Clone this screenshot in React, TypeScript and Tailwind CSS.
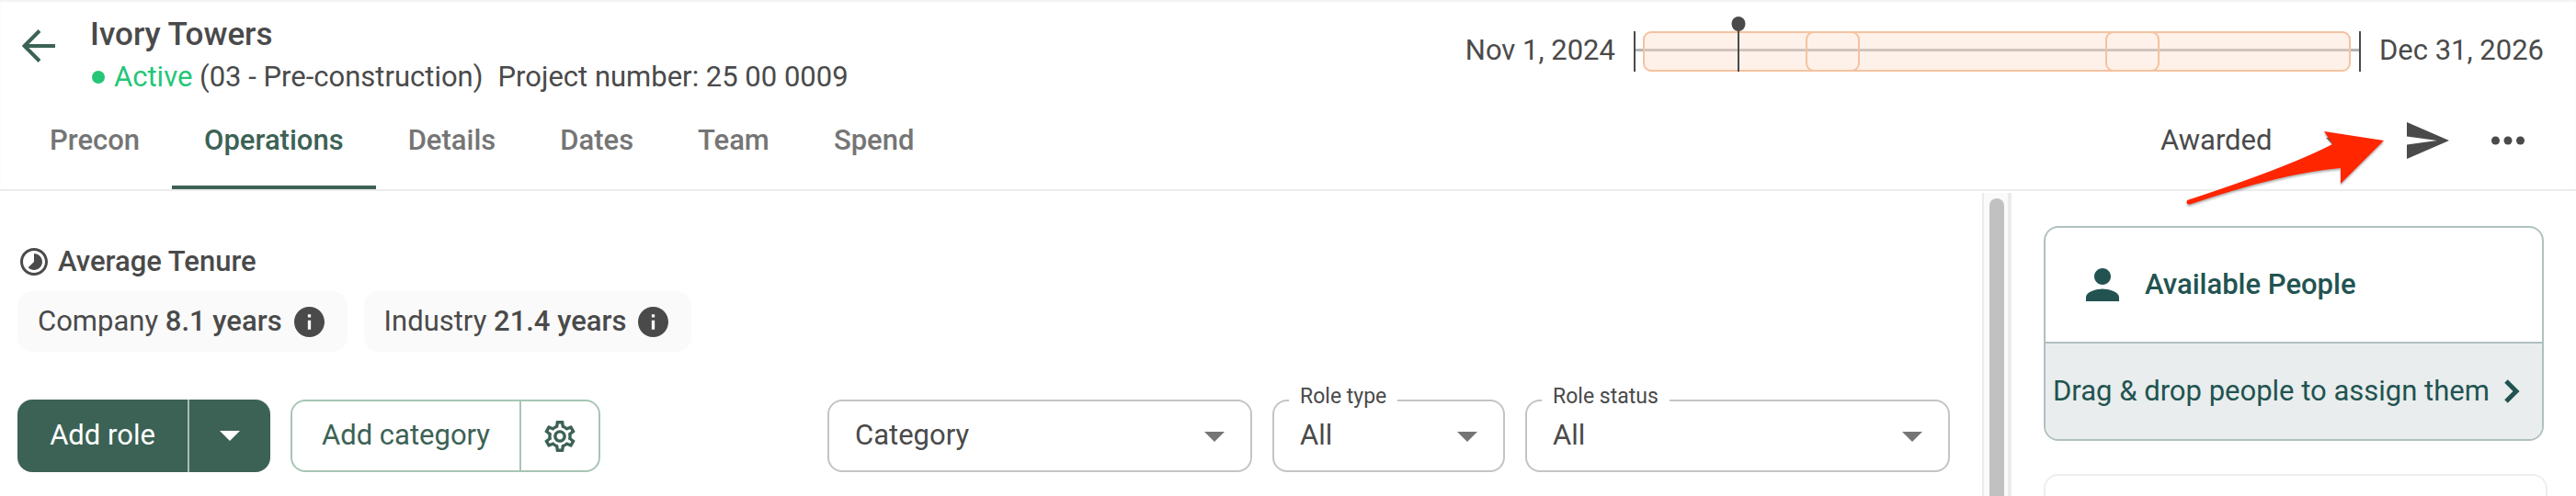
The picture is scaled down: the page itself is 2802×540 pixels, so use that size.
import React from 'react';

const tabs = ['Precon', 'Operations', 'Details', 'Dates', 'Team', 'Spend'];

const Caret = ({ className = '' }: { className?: string }) => (
  <svg viewBox="0 0 22 11" className={`w-[22px] h-[11px] pointer-events-none ${className}`} fill="currentColor" aria-hidden="true">
    <path d="M0 0h22L11 11z" />
  </svg>
);

const InfoIcon = () => (
  <svg viewBox="2 2 20 20" className="size-[33px] text-[#4a4a4a]" fill="currentColor" aria-hidden="true">
    <path d="M12 2C6.48 2 2 6.48 2 12s4.48 10 10 10 10-4.48 10-10S17.52 2 12 2zm1 15h-2v-6h2v6zm0-8h-2V7h2v2z" />
  </svg>
);

type FieldProps = { id: string; label?: string; value: string; className: string };

const SelectField: React.FC<FieldProps> = ({ id, label, value, className }) => (
  <div className={`relative h-[79px] ${className}`}>
    <select
      id={id}
      aria-label={label ?? value}
      className="appearance-none w-full h-full rounded-2xl border-2 border-[#c4c4c4] bg-white px-7 text-[31px] text-[#4a4a4a]"
    >
      <option>{value}</option>
    </select>
    {label && (
      <label htmlFor={id} className="absolute left-[18px] -top-[19px] bg-white px-3 text-[23px] leading-8">
        {label}
      </label>
    )}
    <Caret className="absolute right-[30px] top-[35px] text-[#757575]" />
  </div>
);

const Timeline = () => (
  <div className="flex items-center self-start gap-5">
    <span>Nov 1, 2024</span>
    <svg viewBox="0 0 791 78" className="w-[791px] h-[78px]" fill="none" aria-hidden="true">
      <path d="M0 38.500H791" stroke="#b4b4b4" strokeWidth="3" />
      <rect x="10" y="18" width="770" height="44" rx="9" fill="#f9dcc8" fillOpacity=".4" />
      <g stroke="#f4c2a0" strokeWidth="2">
        <rect x="11" y="19" width="234" height="42" rx="8" />
        <rect x="188" y="19" width="383" height="42" rx="8" />
        <rect x="514" y="19" width="265" height="42" rx="8" />
      </g>
      <path d="M1 18V62M790 18V62M114 10V62" stroke="#4a4a4a" strokeWidth="2" />
      <ellipse cx="114" cy="10" rx="7.500" ry="8" fill="#4a4a4a" />
    </svg>
    <span>Dec 31, 2026</span>
  </div>
);

const Header = () => (
  <header className="relative border-b-2 border-[#ededed] shadow-[inset_0_2px_2px_#f3f3f3]">
    <div className="flex justify-between pl-6 pr-[35px] pt-4">
      <div className="flex gap-[38px]">
        <button aria-label="Back" className="text-[#3c6255] self-start mt-4">
          <svg viewBox="0 0 36 36" className="size-9" fill="none" stroke="currentColor" strokeWidth="4" aria-hidden="true">
            <path d="M36 18H3M19 1.500L2.500 18 19 34.500" />
          </svg>
        </button>
        <div className="pt-0.5">
          <h1 className="text-[35px] leading-10 font-medium">Ivory Towers</h1>
          <p className="flex items-center leading-[52px] whitespace-pre">
            <span className="size-[14px] rounded-full bg-[#24c677] mr-2.5 ml-0.5" />
            <span className="text-[#24c677]">Active</span> (03 - Pre-construction)
            <span className="ml-4">Project number: 25 00 0009</span>
          </p>
        </div>
      </div>
      <Timeline />
    </div>

    <div className="flex justify-between items-start">
      <nav className="flex pl-[19px]">
        {tabs.map((tab) => (
          <a
            key={tab}
            href="#"
            className={
              tab === 'Operations'
                ? 'h-24 px-[35px] pt-5 font-medium text-[#3c6255] border-b-4 border-[#3c6255]'
                : 'h-24 px-[35px] pt-5 font-medium text-[#757575]'
            }
          >
            {tab}
          </a>
        ))}
      </nav>
      <div className="flex items-center h-[86px] pr-14 gap-[46px]">
        <div className="relative">
          <select aria-label="Status" className="appearance-none w-[222px]">
            <option>Awarded</option>
          </select>
          <Caret className="absolute right-5 top-5 text-[#757575]" />
        </div>
        <button aria-label="Send">
          <svg viewBox="2 3 21 18" className="w-[46px] h-[40px]" fill="currentColor" preserveAspectRatio="none" aria-hidden="true">
            <path d="M2.010 21L23 12 2.010 3 2 10l15 2-15 2z" />
          </svg>
        </button>
        <button aria-label="More">
          <svg viewBox="0 0 36 10" className="w-9 h-2.5" fill="currentColor" aria-hidden="true">
            <circle cx="4.500" cy="5" r="4.500" />
            <circle cx="18" cy="5" r="4.500" />
            <circle cx="31.500" cy="5" r="4.500" />
          </svg>
        </button>
      </div>
    </div>

    {/* callout pointing at the send button */}
    <svg viewBox="0 0 222 90" className="absolute right-[206px] top-[138px] w-[222px] h-[90px] pointer-events-none drop-shadow-[0_2px_1px_rgba(0,0,0,0.3)]" aria-hidden="true">
      <path d="M5 80Q115 44 163 19L154 5 219 15 172 62V45Q110 50 8 84.500Q5 85 4.500 82.500Z" fill="#ff2600" />
    </svg>
  </header>
);

const Tenure = () => (
  <section>
    <h2 className="flex items-center gap-[11px] px-[3px] leading-[44px] font-medium">
      <svg viewBox="2 2 20 20" className="size-[30px]" fill="currentColor" aria-hidden="true">
        <path d="M16.240 7.760C15.070 6.590 13.540 6 12 6v6l-4.240 4.240c2.340 2.340 6.140 2.340 8.490 0 2.340-2.340 2.340-6.140-.01-8.480zM12 2C6.480 2 2 6.480 2 12s4.480 10 10 10 10-4.480 10-10S17.520 2 12 2zm0 18c-4.420 0-8-3.580-8-8s3.580-8 8-8 8 3.580 8 8-3.580 8-8 8z" />
      </svg>
      Average Tenure
    </h2>
    <div className="flex gap-[18px] mt-2.5">
      {[
        ['Company', '8.1 years'],
        ['Industry', '21.4 years'],
      ].map(([name, years]) => (
        <div key={name} className="flex items-center h-[66px] pl-[22px] pr-[25px] gap-[13px] rounded-2xl bg-[#fafafa]">
          <span>
            {name} <b className="font-medium">{years}</b>
          </span>
          <InfoIcon />
        </div>
      ))}
    </div>
  </section>
);

const Toolbar = () => (
  <div className="flex items-center justify-between mt-[52px]">
    <div className="flex gap-[22px] h-[79px]">
      <div className="flex rounded-2xl bg-[#3c6255] text-white">
        <button className="w-[187px] border-r-2 border-[#a9bdb5]">Add role</button>
        <button aria-label="More role options" className="w-[88px] flex items-center justify-center">
          <Caret />
        </button>
      </div>
      <div className="flex rounded-2xl border-2 border-[#a8c5b6] text-[#3c6255]">
        <button className="w-[249px] border-r-2 border-[#a8c5b6]">Add category</button>
        <button aria-label="Category settings" className="w-[84px] flex items-center justify-center">
          <svg viewBox="2 2 20 20" className="size-[34px]" fill="currentColor" aria-hidden="true">
            <path d="M19.430 12.980c.04-.32.07-.64.07-.98 0-.34-.03-.66-.07-.98l2.110-1.650c.19-.15.24-.42.12-.64l-2-3.460c-.09-.16-.26-.25-.44-.25-.06 0-.12.010-.17.030l-2.490 1c-.52-.4-1.080-.73-1.690-.98l-.38-2.650C14.460 2.180 14.250 2 14 2h-4c-.25 0-.46.18-.49.42l-.38 2.650c-.61.25-1.170.59-1.690.98l-2.490-1c-.06-.02-.12-.03-.18-.03-.17 0-.34.09-.43.25l-2 3.460c-.13.22-.07.49.12.64l2.110 1.650c-.04.32-.07.65-.07.98 0 .33.030.66.070.98l-2.110 1.650c-.19.15-.24.42-.12.64l2 3.460c.09.16.26.25.44.25.06 0 .12-.01.17-.03l2.490-1c.52.4 1.080.73 1.690.98l.38 2.650c.03.24.24.42.49.42h4c.25 0 .46-.18.49-.42l.38-2.650c.61-.25 1.170-.59 1.690-.98l2.490 1c.06.02.12.03.18.03.17 0 .34-.09.43-.25l2-3.460c.12-.22.07-.49-.12-.64l-2.110-1.650zm-1.980-1.710c.04.31.05.52.05.73 0 .21-.02.43-.05.73l-.14 1.130.89.7 1.080.84-.7 1.210-1.270-.51-1.040-.42-.9.68c-.43.32-.84.56-1.250.73l-1.060.43-.16 1.130-.2 1.350h-1.400l-.19-1.350-.16-1.130-1.060-.43c-.43-.18-.83-.41-1.230-.71l-.91-.7-1.060.43-1.270.51-.7-1.210 1.080-.84.89-.7-.14-1.130c-.03-.31-.05-.54-.05-.74s.02-.43.05-.73l.14-1.130-.89-.7-1.080-.84.7-1.210 1.270.51 1.040.42.9-.68c.43-.32.84-.56 1.250-.73l1.060-.43.16-1.130.2-1.350h1.390l.19 1.350.16 1.130 1.060.43c.43.18.83.41 1.230.71l.91.7 1.060-.43 1.270-.51.7 1.210-1.070.85-.89.7.14 1.130zM12 8c-2.210 0-4 1.790-4 4s1.790 4 4 4 4-1.790 4-4-1.790-4-4-4zm0 6c-1.100 0-2-.9-2-2s.9-2 2-2 2 .9 2 2-.9 2-2 2z" />
          </svg>
        </button>
      </div>
    </div>
    <div className="flex gap-[22px]">
      <SelectField id="category" value="Category" className="w-[462px]" />
      <SelectField id="role-type" label="Role type" value="All" className="w-[253px]" />
      <SelectField id="role-status" label="Role status" value="All" className="w-[462px]" />
    </div>
  </div>
);

const Sidebar = () => (
  <aside className="w-[614px] shrink-0 px-[35px] pt-[38px] text-[#225351]">
    <div className="rounded-2xl border-2 border-[#b1c0c0] overflow-hidden">
      <h3 className="flex items-center gap-7 h-[124px] pl-11 font-medium">
        <svg viewBox="4 4 16 16" className="size-9" fill="currentColor" aria-hidden="true">
          <path d="M12 12c2.210 0 4-1.790 4-4s-1.790-4-4-4-4 1.790-4 4 1.790 4 4 4zm0 2c-2.670 0-8 1.340-8 4v2h16v-2c0-2.660-5.330-4-8-4z" />
        </svg>
        Available People
      </h3>
      <button className="flex items-center justify-between w-full h-[106px] pl-2 pr-6 border-t-2 border-[#b1c0c0] bg-[#e9eded] whitespace-nowrap">
        Drag &amp; drop people to assign them
        <svg viewBox="0 0 17 26" className="w-[17px] h-[26px] shrink-0" fill="none" stroke="currentColor" strokeWidth="5" aria-hidden="true">
          <path d="M2 2L13 13 2 24" />
        </svg>
      </button>
    </div>
    <div className="mt-9 -mr-1 h-[24px] rounded-t-2xl border-2 border-b-0 border-[#ededed]" />
  </aside>
);

const App: React.FC = () => (
  <div className="h-screen overflow-hidden flex flex-col bg-white text-[31px] text-[#4a4a4a] font-[Roboto,sans-serif]">
    <Header />
    <div className="flex flex-1 min-h-0">
      <main className="flex-1 pl-[19px] pr-[35px] pt-[55px]">
        <Tenure />
        <Toolbar />
      </main>
      <div className="w-8 mt-0.5 px-1.5 pt-1.5 border-l-2 border-r-4 border-[#ebebeb] bg-[#fafafa]">
        <div className="h-full w-4 rounded-t-full bg-[#c1c1c1]" />
      </div>
      <Sidebar />
    </div>
  </div>
);

export default App;
